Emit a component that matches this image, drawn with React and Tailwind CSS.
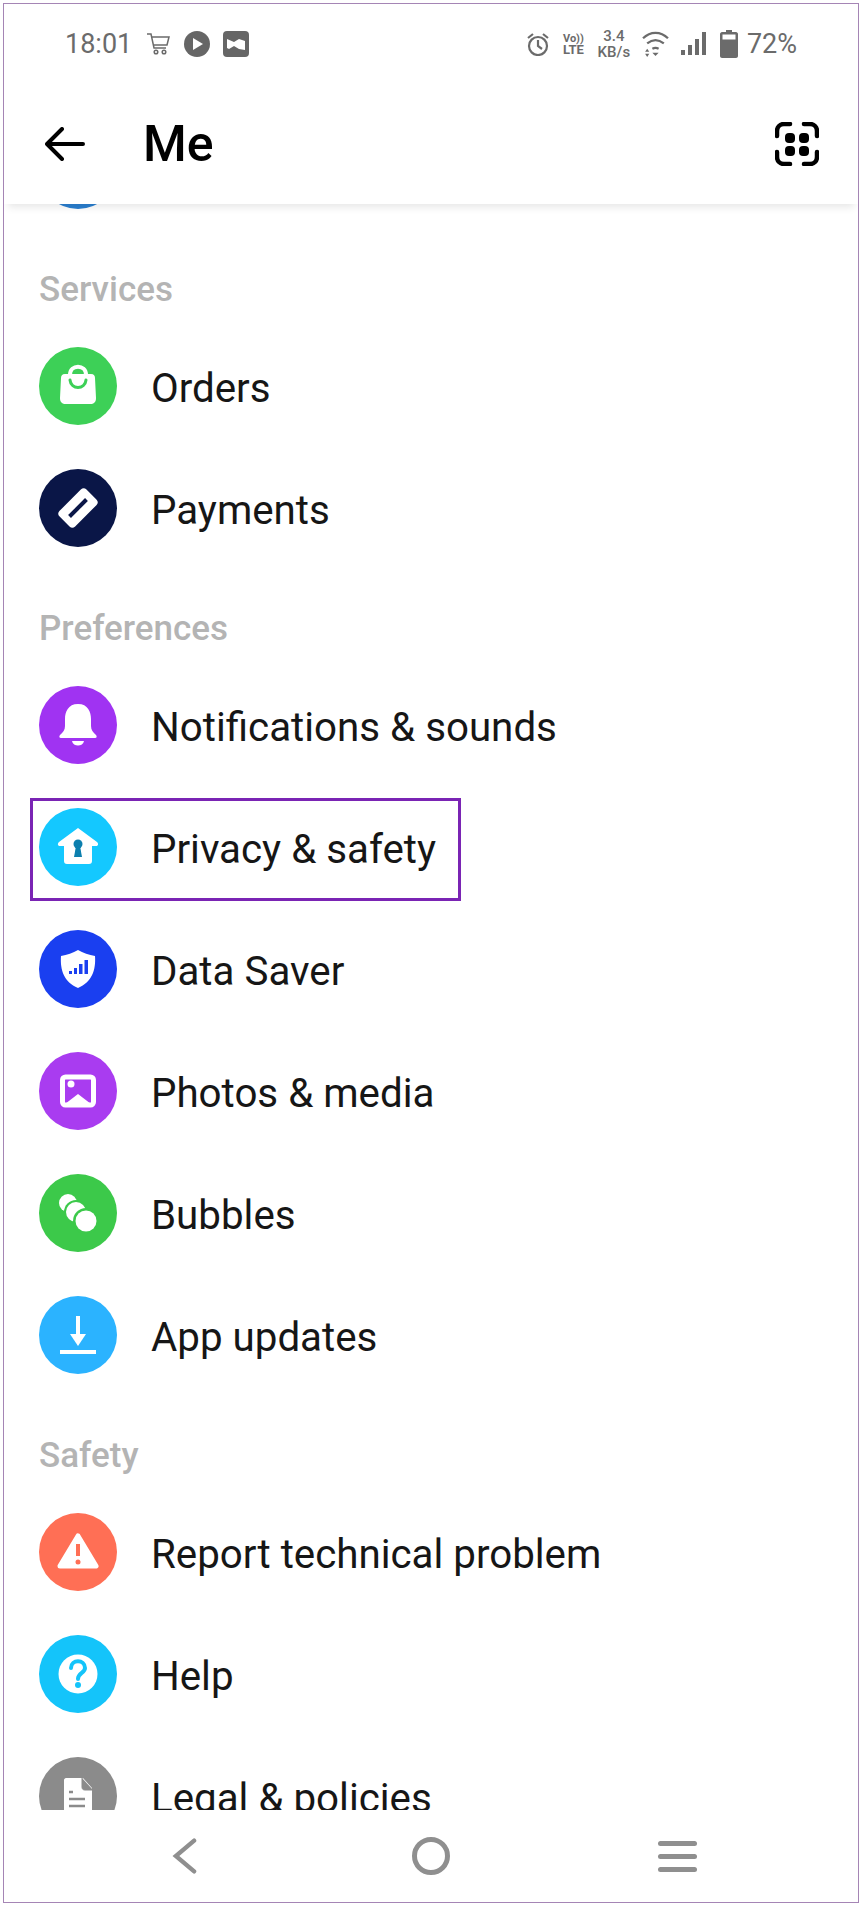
import React from "react";

// Icons drawn in a 78x78 box, same size as the round badge
function Badge({ color, children }) {
  return (
    <svg viewBox="0 0 78 78" className="w-[78px] h-[78px] shrink-0">
      <circle cx="39" cy="39" r="39" fill={color} />
      {children}
    </svg>
  );
}

const icons = {
  orders: (
    <Badge color="#3dd057">
      <path d="M31 28c0-11 16-11 16 0" fill="none" stroke="#fff" strokeWidth="4" />
      <path d="M26 27h26c3 0 4 2 4 4l1 20c0 4-2 6-6 6H27c-4 0-6-2-6-6l1-20c0-2 1-4 4-4z" fill="#fff" />
      <path d="M31 33c1 10 15 10 16 0" fill="none" stroke="#3dd057" strokeWidth="3" strokeLinecap="round" />
    </Badge>
  ),
  payments: (
    <Badge color="#0a1647">
      <g transform="rotate(-45 39 39)">
        <rect x="20" y="28" width="38" height="22" rx="4" fill="#fff" />
        <rect x="27" y="37" width="24" height="4" fill="#0a1647" />
      </g>
    </Badge>
  ),
  bell: (
    <Badge color="#a033f2">
      <path d="M39 18c-10 0-13 8-13 15v7c0 4-2 6-5 9-1 1-1 3 1 3h34c2 0 2-2 1-3-3-3-5-5-5-9v-7c0-7-3-15-13-15z" fill="#fff" />
      <path d="M33 55h12c-1 6-11 6-12 0z" fill="#fff" />
    </Badge>
  ),
  privacy: (
    <Badge color="#14c8ff">
      <path d="M39 20l19 14c2 2 1 4-1 4h-4v15c0 2-1 3-3 3H28c-2 0-3-1-3-3V38h-4c-2 0-3-2-1-4z" fill="#fff" />
      <circle cx="39" cy="36" r="4.5" fill="#0c7fae" />
      <path d="M37 38l-2 11h8l-2-11z" fill="#0c7fae" />
    </Badge>
  ),
  saver: (
    <Badge color="#1a3ff0">
      <path d="M39 20c5 3 11 5 17 6 1 14-3 26-17 32-14-6-18-18-17-32 6-1 12-3 17-6z" fill="#fff" />
      <rect x="30" y="41" width="3" height="3" fill="#1a3ff0" />
      <rect x="35" y="38" width="3" height="6" fill="#1a3ff0" />
      <rect x="40" y="34" width="3.5" height="10" fill="#1a3ff0" />
      <rect x="45.5" y="30" width="3.5" height="14" fill="#1a3ff0" />
    </Badge>
  ),
  photos: (
    <Badge color="#a93cf0">
      <rect x="23.5" y="25" width="31" height="28" rx="3" fill="none" stroke="#fff" strokeWidth="5" />
      <circle cx="32" cy="32" r="3.5" fill="#fff" />
      <path d="M26 52l13-10 13 10z" fill="#fff" />
    </Badge>
  ),
  bubbles: (
    <Badge color="#3cc94a">
      <circle cx="29" cy="29" r="9" fill="#fff" />
      <circle cx="37" cy="38" r="12" fill="#3cc94a" />
      <circle cx="37" cy="38" r="10" fill="#fff" />
      <circle cx="47" cy="47" r="13" fill="#3cc94a" />
      <circle cx="47" cy="47" r="10.5" fill="#fff" />
    </Badge>
  ),
  updates: (
    <Badge color="#2bb3ff">
      <path d="M39 20v20" stroke="#fff" strokeWidth="4" />
      <path d="M31 38h16l-8 12z" fill="#fff" />
      <path d="M21 56h36" stroke="#fff" strokeWidth="4" />
    </Badge>
  ),
  report: (
    <Badge color="#ff6f55">
      <path d="M39 23L57 53H21z" fill="#fff" stroke="#fff" strokeWidth="5" strokeLinejoin="round" />
      <path d="M39 31v12" stroke="#ff6f55" strokeWidth="4" />
      <circle cx="39" cy="49" r="2.5" fill="#ff6f55" />
    </Badge>
  ),
  help: (
    <Badge color="#14c4fa">
      <circle cx="39" cy="39" r="19.5" fill="#fff" />
      <path d="M32 33c0-9 14-9 14 0 0 5-7 5-7 11" fill="none" stroke="#14c4fa" strokeWidth="4" strokeLinecap="round" />
      <circle cx="39" cy="50" r="3" fill="#14c4fa" />
    </Badge>
  ),
  legal: (
    <Badge color="#8b8b8b">
      <path d="M27 21h17l9 10v37H25V23c0-1 1-2 2-2z" fill="#fff" />
      <path d="M43 21v9c0 2 1 3 3 3h8" fill="#8b8b8b" stroke="#8b8b8b" strokeWidth="1" />
      <path d="M30 35h4M30 42h16M30 49h16" stroke="#8b8b8b" strokeWidth="2.5" />
    </Badge>
  ),
};

function Row({ icon, label, highlight }) {
  return (
    <div className="relative h-[122px] shrink-0 flex items-center gap-[34px] pl-[35px] text-[40.3px] text-[#161616]">
      {icons[icon]}
      <span className="pt-[7px]">{label}</span>
      {highlight && (
        <div className="absolute left-[26px] top-[12px] w-[431px] h-[103px] border-[3px] border-[#7a24b4]" />
      )}
    </div>
  );
}

function SectionLabel({ children }) {
  return (
    <div className="h-[95px] shrink-0 flex items-end pl-[35px] pb-[15px]">
      <span className="text-[35px] leading-[40px] font-medium text-[#b4b4b4]">{children}</span>
    </div>
  );
}

function StatusBar() {
  return (
    <div className="h-[82px] shrink-0 pb-[2px] flex items-center justify-between pl-[61px] pr-[61px] text-[#6b6b6b]">
      <div className="flex items-center">
        <span className="text-[27px] leading-none mr-[14px]">18:01</span>
        <svg viewBox="0 0 24 22" className="w-[24px] h-[22px] mr-[14px]" fill="none" stroke="#6b6b6b" strokeWidth="1.5">
          <path d="M1 1h4l3 14h12M6 4h17l-2 8H8" />
          <circle cx="10" cy="19" r="1.8" />
          <circle cx="18" cy="19" r="1.8" />
        </svg>
        <svg viewBox="0 0 26 26" className="w-[26px] h-[26px] mr-[13px]">
          <circle cx="13" cy="13" r="13" fill="#666" />
          <path d="M9 7l10 6-10 6z" fill="#fff" />
        </svg>
        <svg viewBox="0 0 26 26" className="w-[26px] h-[26px]">
          <rect width="26" height="26" rx="4" fill="#666" />
          <path d="M4 8l7 3 5-3 6 2v9l-6-1-5-3-5 3-2-1z" fill="#fff" />
        </svg>
      </div>
      <div className="flex items-center">
        <svg viewBox="0 0 24 24" className="w-[24px] h-[24px] mr-[12px]" fill="none" stroke="#6b6b6b" strokeWidth="2.2">
          <circle cx="12" cy="14" r="9" />
          <path d="M12 8v6l4 3M2 6l5-4M22 6l-5-4" />
        </svg>
        <div className="flex flex-col items-center mr-[12px] text-[11px] leading-[11px] font-bold w-[23px]">
          <span>Vo))</span>
          <span className="text-[13px]">LTE</span>
        </div>
        <div className="flex flex-col items-center mr-[11px] text-[15px] leading-[16px] font-medium w-[34px]">
          <span>3.4</span>
          <span>KB/s</span>
        </div>
        <svg viewBox="0 0 26 26" className="w-[27px] h-[27px] mr-[12px]" fill="none" stroke="#6b6b6b" strokeWidth="2.2">
          <path d="M1 7c7-7 17-7 24 0M5 12c5-4 11-4 16 0M10 17c2-1 4-1 6 0" />
          <path d="M13 24l-3-3h6z" fill="#6b6b6b" stroke="none" />
          <path d="M5 17l-2 3h4zM5 25l-2-3h4z" fill="#6b6b6b" stroke="none" />
        </svg>
        <svg viewBox="0 0 25 24" className="w-[25px] h-[24px] mr-[14px]" fill="#6b6b6b">
          <rect x="0" y="18" width="4" height="5" />
          <rect x="7" y="13" width="4" height="10" />
          <rect x="14" y="7" width="4" height="16" />
          <rect x="21" y="0" width="4" height="23" />
        </svg>
        <svg viewBox="0 0 18 28" className="w-[18px] h-[28px] mr-[9px]" fill="#6b6b6b">
          <path d="M6 0h6v2h4c1 0 2 1 2 2v22c0 1-1 2-2 2H2c-1 0-2-1-2-2V4c0-1 1-2 2-2h4z" />
          <rect x="2.5" y="4.5" width="13" height="5" fill="#fff" />
        </svg>
        <span className="text-[27px] leading-none">72%</span>
      </div>
    </div>
  );
}

function Header() {
  return (
    <div className="relative z-10 h-[118px] shrink-0 bg-white shadow-[0_7px_8px_-4px_rgba(0,0,0,0.1)] flex items-center justify-between pl-[41px] pr-[39px] pb-[3px]">
      <div className="flex items-center gap-[58px]">
        <svg viewBox="0 0 40 34" className="w-[40px] h-[34px]" fill="none" stroke="#000" strokeWidth="4" strokeLinecap="round" strokeLinejoin="round">
          <path d="M38 17H3M17 2L2 17l15 15" />
        </svg>
        <span className="text-[50px] leading-none font-medium text-black">Me</span>
      </div>
      <svg viewBox="0 0 44 44" className="w-[44px] h-[44px]" fill="none">
        <path d="M2 14V9c0-4 3-7 7-7h6M29 2h6c4 0 7 3 7 7v5M42 30v5c0 4-3 7-7 7h-6M15 42H9c-4 0-7-3-7-7v-5" stroke="#000" strokeWidth="4.5" strokeLinecap="round" />
        <rect x="10" y="11" width="10" height="10" rx="4" fill="#000" />
        <rect x="24" y="11" width="10" height="10" rx="4" fill="#000" />
        <rect x="10" y="24" width="10" height="10" rx="4" fill="#000" />
        <rect x="24" y="24" width="10" height="10" rx="4" fill="#000" />
      </svg>
    </div>
  );
}

function NavBar() {
  return (
    <div className="flex-1 relative bg-white flex items-center justify-between pl-[168px] pr-[161px]">
      <svg viewBox="0 0 26 36" className="w-[25px] h-[36px] mr-[7px]" fill="none" stroke="#8f8f8f" strokeWidth="4.5" strokeLinecap="round">
        <path d="M23 2L4 18l19 16" />
      </svg>
      <div className="w-[38px] h-[38px] rounded-full border-[5px] border-[#8f8f8f]" />
      <div className="flex flex-col gap-[8px] w-[39px]">
        <div className="h-[5px] rounded-full bg-[#8f8f8f]" />
        <div className="h-[5px] rounded-full bg-[#8f8f8f]" />
        <div className="h-[5px] rounded-full bg-[#8f8f8f]" />
      </div>
    </div>
  );
}

export default function App() {
  return (
    <div className="w-[862px] h-[1906px] bg-white p-[3px] font-[Roboto,sans-serif]">
      <div className="h-full border border-[#a585b5] flex flex-col overflow-hidden">
        <StatusBar />
        <Header />
        {/* scrolled list, last row is cut by the nav bar */}
        <div className="h-[1606px] shrink-0 overflow-hidden flex flex-col">
          <div className="shrink-0 pl-[35px] mt-[-73px] mb-[21px]">
            <div className="w-[78px] h-[78px] rounded-full bg-[#2a7fd0]" />
          </div>
          <SectionLabel>Services</SectionLabel>
          <Row icon="orders" label="Orders" />
          <Row icon="payments" label="Payments" />
          <SectionLabel>Preferences</SectionLabel>
          <Row icon="bell" label="Notifications & sounds" />
          <Row icon="privacy" label="Privacy & safety" highlight />
          <Row icon="saver" label="Data Saver" />
          <Row icon="photos" label="Photos & media" />
          <Row icon="bubbles" label="Bubbles" />
          <Row icon="updates" label="App updates" />
          <SectionLabel>Safety</SectionLabel>
          <Row icon="report" label="Report technical problem" />
          <Row icon="help" label="Help" />
          <Row icon="legal" label="Legal & policies" />
        </div>
        <NavBar />
      </div>
    </div>
  );
}
